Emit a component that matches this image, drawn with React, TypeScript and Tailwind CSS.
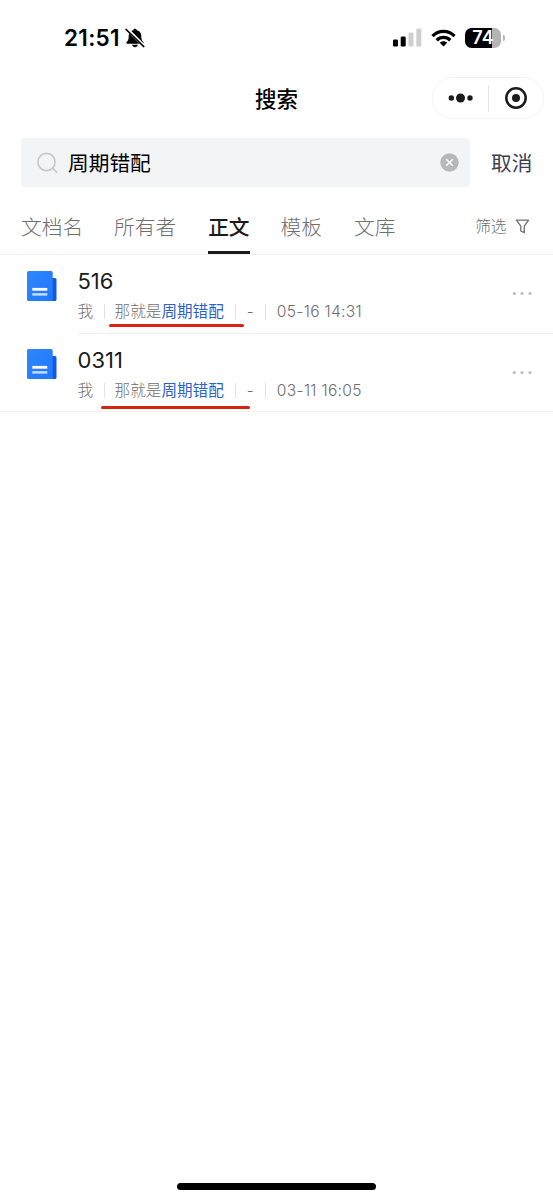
import React from 'react';

interface SearchResult {
  title: string;
  owner: string;
  before: string;
  match: string;
  date: string;
}

const results: SearchResult[] = [
  { title: '516', owner: '我', before: '那就是', match: '周期错配', date: '05-16 14:31' },
  { title: '0311', owner: '我', before: '那就是', match: '周期错配', date: '03-11 16:05' },
];

const StatusBar: React.FC = () => (
  <div className="flex h-[75px] items-center justify-between pr-[48px] pl-[64px]">
    <div className="flex items-center">
      <span className="w-[58px] text-[22.500px] leading-[22px] font-semibold tracking-[0.300px] whitespace-nowrap text-black">21:51</span>
      <svg className="ml-[3px]" width="20" height="20" viewBox="0 0 20 20">
        <path d="M10 .8c1 0 1.700.7 1.800 1.500 2.900.8 4.500 2.900 4.500 5.700 0 4 .9 4.800 2 6 .7.8.4 1.700-.6 1.700H2.300c-1 0-1.300-.9-.6-1.700 1.100-1.200 2-2 2-6 0-2.800 1.600-4.900 4.500-5.700C8.300 1.500 9 .8 10 .8z" fill="#000" />
        <path d="M7.100 16.700h5.800c-.3 1.600-1.400 2.500-2.900 2.500s-2.600-.9-2.900-2.500z" fill="#000" />
        <path d="M1.500 .6l18 18" stroke="#fff" strokeWidth="3.400" />
        <path d="M1 1.400l17.800 17.200" stroke="#000" strokeWidth="1.500" strokeLinecap="round" />
      </svg>
    </div>
    <div className="flex items-center">
      <svg width="29" height="19" viewBox="0 0 29 19">
        <rect x="0" y="11.500" width="5" height="7" rx="1.300" fill="#000" />
        <rect x="7.700" y="8.500" width="5" height="10" rx="1.300" fill="#000" />
        <rect x="15.500" y="4.500" width="5" height="14" rx="1.300" fill="#cfcfcf" />
        <rect x="23.300" y="0.500" width="5" height="18" rx="1.300" fill="#cfcfcf" />
      </svg>
      <svg className="ml-[9px]" width="25" height="18" viewBox="0 0 25 18" fill="none" stroke="#000" strokeWidth="3.300">
        <path d="M1.500 7.100C7.700.9 17.300.9 23.500 7.100" />
        <path d="M5.700 11.200c3.900-3.800 9.700-3.800 13.600 0" />
        <path d="M12.500 17.600l-3.700-3.800c2.100-2 5.300-2 7.400 0z" fill="#000" stroke="none" />
      </svg>
      <div className="ml-[9px] flex h-5 w-9 items-center justify-center rounded-[6.500px] bg-[linear-gradient(90deg,#000_76%,#b5b5b5_76%)] text-[18px] leading-5 font-semibold text-white">
        74
      </div>
      <div className="ml-[2px] h-[6px] w-[2px] rounded-r-full bg-[#b5b5b5]" />
    </div>
  </div>
);

const TitleBar: React.FC = () => (
  <div className="grid h-[46px] grid-cols-[1fr_auto_1fr] items-center px-[9px]">
    <span />
    <h1 className="pt-px text-[21.500px] leading-[30px] font-medium text-black">搜索</h1>
    <div className="flex h-[42px] w-[112px] items-center justify-self-end rounded-full border border-[#f3f3f3]">
      <svg className="ml-[14px]" width="28" height="12" viewBox="0 0 28 12" fill="#1b1b1b">
        <circle cx="4.300" cy="6" r="2.700" />
        <circle cx="13.500" cy="6" r="4.500" />
        <circle cx="23" cy="6" r="2.700" />
      </svg>
      <div className="ml-[13px] h-[27px] w-px bg-[#e6e6e6]" />
      <svg className="ml-[15px]" width="24" height="24" viewBox="0 0 24 24">
        <circle cx="12" cy="12" r="9.700" fill="none" stroke="#1b1b1b" strokeWidth="2.500" />
        <circle cx="12" cy="12" r="4" fill="#1b1b1b" />
      </svg>
    </div>
  </div>
);

const SearchBar: React.FC = () => (
  <div className="mt-[17px] flex items-center pl-[21px]">
    <div className="flex h-[49px] w-[449px] items-center rounded-[4px] bg-[#f3f4f6] pr-[11px] pl-[16px]">
      <svg width="22" height="22" viewBox="0 0 22 22" fill="none" stroke="#c6c7c9" strokeWidth="1.600">
        <circle cx="9.500" cy="10" r="8.600" />
        <path d="M15.600 16.100l4 4" strokeLinecap="round" />
      </svg>
      <span className="ml-[9px] flex-1 pt-[2px] text-[20.700px] leading-[30px] text-black">周期错配</span>
      <svg width="19" height="19" viewBox="0 0 19 19">
        <circle cx="9.500" cy="9.500" r="9.200" fill="#b7b8ba" />
        <path d="M6.200 6.200l6.600 6.600M12.800 6.200l-6.600 6.600" stroke="#fff" strokeWidth="1.500" />
      </svg>
    </div>
    <span className="ml-[21px] pt-[2px] text-[20.700px] leading-[30px] text-[#3d4152]">取消</span>
  </div>
);

const Tabs: React.FC = () => (
  <div className="flex h-[68px] items-end border-b border-[#f0f0f0] pl-[21px] text-[20.700px] leading-[32px] font-light text-[#6f6f6f]">
    <span className="h-[42px]">文档名</span>
    <span className="ml-[31px] h-[42px]">所有者</span>
    <span className="ml-[32px] h-[42px] border-b-[3px] border-[#1b1b1b] font-medium text-[#1b1b1b]">正文</span>
    <span className="ml-[31px] h-[42px]">模板</span>
    <span className="ml-[32px] h-[42px]">文库</span>
    <div className="ml-auto flex h-[42px] items-start pr-[23px] text-[15.700px] leading-[30px]">
      <span>筛选</span>
      <svg className="mt-[7px] ml-[8.500px]" width="15" height="15" viewBox="0 0 15 15" fill="none" stroke="#6f6f6f" strokeWidth="1.300" strokeLinejoin="round">
        <path d="M1.400 1.200h12.200L9.300 7.100v6.600L5.800 12V7.100z" />
      </svg>
    </div>
  </div>
);

const DocIcon: React.FC = () => (
  <svg width="30" height="30" viewBox="0 0 30 30">
    <defs>
      <linearGradient id="doc-front" x1="0" y1="0" x2="1" y2="1">
        <stop offset="0" stopColor="#2f86fb" />
        <stop offset="1" stopColor="#1f78ff" />
      </linearGradient>
    </defs>
    <path d="M24 7h4a1.500 1.500 0 0 1 1.500 1.500v20A1.500 1.500 0 0 1 28 30h-5z" fill="#1157e6" />
    <path d="M1.500 0h22.700a1.500 1.500 0 0 1 1.500 1.500v27c0 .9.300 1.500 1 1.500H1.500A1.500 1.500 0 0 1 0 28.500v-27A1.500 1.500 0 0 1 1.500 0z" fill="url(#doc-front)" />
    <path d="M5.300 16.900h15v2.800h-15z" fill="#fff" />
    <path d="M5.300 22.200h15v2.400h-15z" fill="#c9e0ff" />
  </svg>
);

const Divider: React.FC = () => <span className="h-[15px] w-px bg-[#e2e2e2]" />;

const ResultRow: React.FC<{ result: SearchResult; last: boolean }> = ({ result, last }) => (
  <div className={last ? 'relative flex border-b border-[#efefef] pl-[26.500px]' : 'relative flex pl-[26.500px]'}>
    <div className={last ? 'mt-[15px]' : 'mt-4'}>
      <DocIcon />
    </div>
    <div className={last ? 'ml-[21px] flex h-[77px] flex-1' : 'ml-[21px] flex h-[79px] flex-1 border-b border-[#f1f1f1]'}>
      <div className="flex-1">
        <div className="mt-3 text-[22px] leading-[28px] text-[#1b1b1b]">{result.title}</div>
        <div className="mt-[5px] flex h-[22px] items-center text-[15.600px] leading-[22px] font-light whitespace-nowrap text-[#6f6f6f]">
          <span className="mr-[11px] pt-px">{result.owner}</span>
          <Divider />
          <span className="ml-[9.500px] pt-px">{result.before}</span>
          <span className="mr-[11px] pt-px font-normal text-[#2b62cb]">{result.match}</span>
          <Divider />
          <span className="mx-[11px] pt-px">-</span>
          <Divider />
          <span className="ml-[11px] pt-px tracking-[0.300px]">{result.date}</span>
        </div>
      </div>
      <svg className="mt-[36px] mr-[20px]" width="21" height="5" viewBox="0 0 21 5" fill="#bdbdbd">
        <circle cx="2.300" cy="2.500" r="1.600" />
        <circle cx="10" cy="2.500" r="1.600" />
        <circle cx="18" cy="2.500" r="1.600" />
      </svg>
    </div>
    {/* hand-drawn underline over the matched snippet */}
    {last ? (
      <div className="absolute top-[71.500px] left-[101px] h-[3px] w-[149px] rounded-full bg-[#d3250f]" />
    ) : (
      <div className="absolute top-[68.500px] left-[109px] h-[3px] w-[135px] rounded-full bg-[#e02010]" />
    )}
  </div>
);

const App: React.FC = () => {
  return (
    <div className="flex h-[1200px] w-[553px] flex-col overflow-hidden bg-white font-['Inter','Noto_Sans_CJK_SC',sans-serif]">
      <StatusBar />
      <TitleBar />
      <SearchBar />
      <Tabs />
      <main className="flex-1">
        {results.map((result, i) => (
          <ResultRow key={result.title} result={result} last={i === results.length - 1} />
        ))}
      </main>
      <div className="mb-[10px] h-[7px] w-[199px] self-center rounded-full bg-black" />
    </div>
  );
};

export default App;
